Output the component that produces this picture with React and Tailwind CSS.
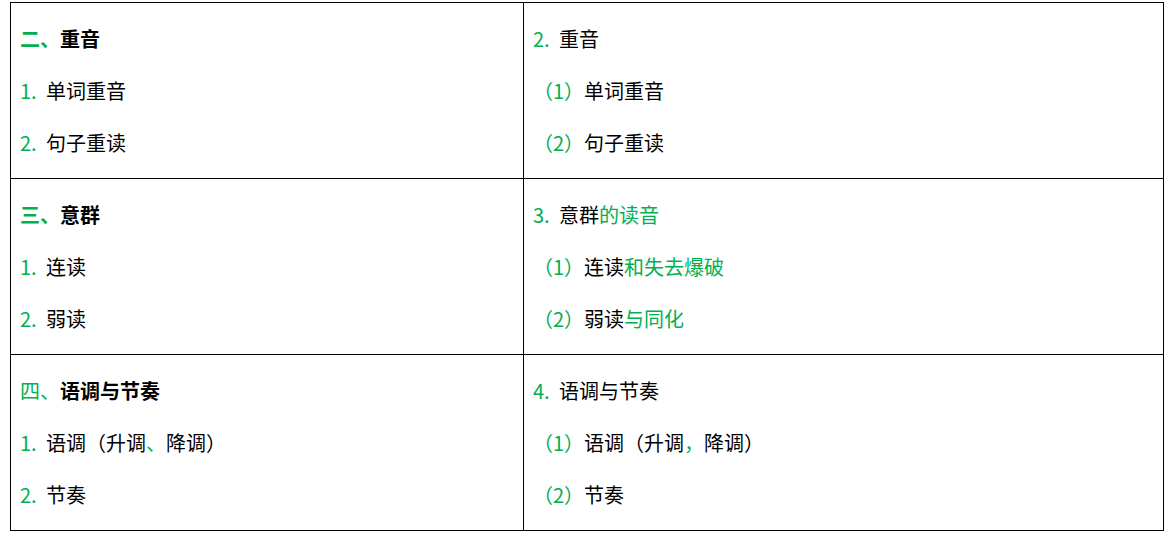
import React from 'react';

const G = ({ children, bold }) => (
  <span className={`text-[#00b050] ${bold ? 'font-bold' : ''}`}>{children}</span>
);

const Num = ({ n }) => <span className="inline-block w-[26px] text-[#00b050]">{n}.</span>;
const Sub = ({ n }) => <span className="text-[#00b050]">（{n}）</span>;

const Cell = ({ children, last }) => (
  <div className={`border-b border-black pl-[9px] pt-[10px] h-[176px] ${last ? '' : 'border-r'}`}>
    {children}
  </div>
);

const Line = ({ children }) => <div className="leading-[52px] whitespace-nowrap">{children}</div>;

const rows = [
  {
    left: [
      <><G bold>二、</G><span className="font-bold">重音</span></>,
      <><Num n={1} />单词重音</>,
      <><Num n={2} />句子重读</>,
    ],
    right: [
      <><Num n={2} />重音</>,
      <><Sub n={1} />单词重音</>,
      <><Sub n={2} />句子重读</>,
    ],
  },
  {
    left: [
      <><G bold>三、</G><span className="font-bold">意群</span></>,
      <><Num n={1} />连读</>,
      <><Num n={2} />弱读</>,
    ],
    right: [
      <><Num n={3} />意群<G>的读音</G></>,
      <><Sub n={1} />连读<G>和失去爆破</G></>,
      <><Sub n={2} />弱读<G>与同化</G></>,
    ],
  },
  {
    left: [
      <><G>四、</G><span className="font-bold">语调与节奏</span></>,
      <><Num n={1} />语调（升调<G>、</G>降调）</>,
      <><Num n={2} />节奏</>,
    ],
    right: [
      <><Num n={4} />语调与节奏</>,
      <><Sub n={1} />语调（升调<G>，</G>降调）</>,
      <><Sub n={2} />节奏</>,
    ],
  },
];

export default function App() {
  return (
    <div className="w-[1175px] h-[538px] bg-white pt-[2px] pl-[10px] overflow-hidden text-[20px] text-black font-['Noto_Sans_CJK_SC','Microsoft_YaHei',sans-serif]">
      <div className="w-[1154px] grid grid-cols-[513px_640px] border-l border-t border-r border-black">
        {rows.map((r, i) => (
          <React.Fragment key={i}>
            <Cell>
              {r.left.map((l, j) => <Line key={j}>{l}</Line>)}
            </Cell>
            <Cell last>
              {r.right.map((l, j) => <Line key={j}>{l}</Line>)}
            </Cell>
          </React.Fragment>
        ))}
      </div>
    </div>
  );
}
